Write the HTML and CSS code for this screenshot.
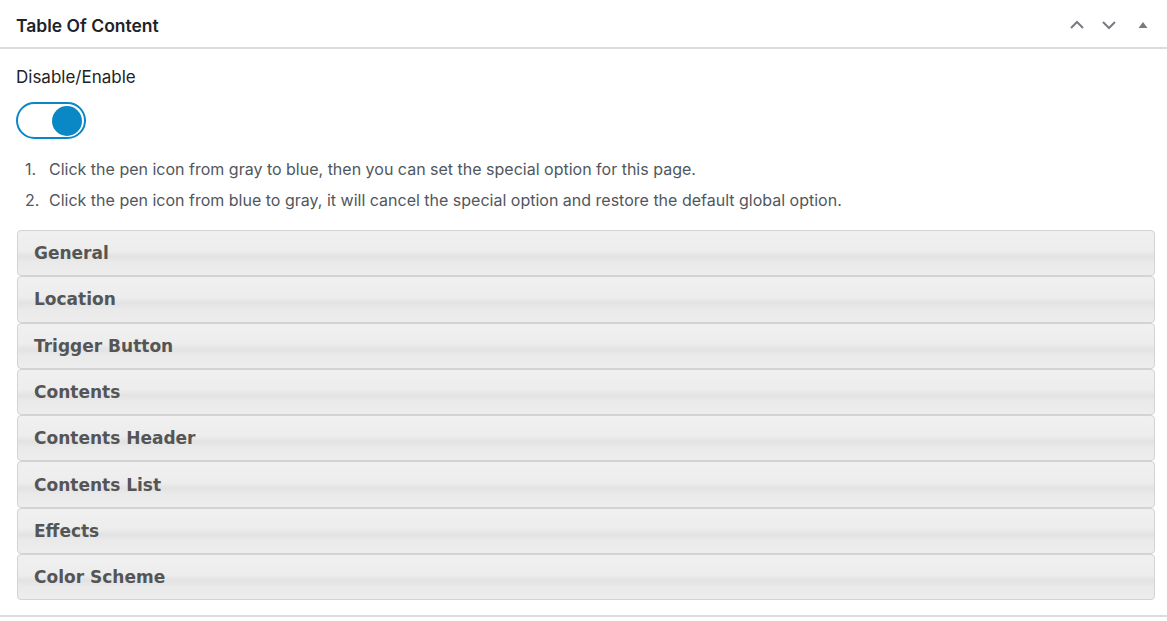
FILE: index.html
```html
<!DOCTYPE html>
<html lang="en">
<head>
    <meta charset="UTF-8">
    <title>Table Of Content</title>
    <link rel="stylesheet" href="styles.css">
</head>
<body>
    <div class="postbox">
        <!-- Cabecera de la caja -->
        <div class="postbox-header">
            <h2 class="postbox-title">Table Of Content</h2>
            <div class="handle-actions">
                <button class="handle-btn" aria-label="Move up">
                    <svg width="20" height="20" viewBox="0 0 20 20"><path d="M4 13 L10 7 L16 13" fill="none" stroke="#787c82" stroke-width="2"/></svg>
                </button>
                <button class="handle-btn" aria-label="Move down">
                    <svg width="20" height="20" viewBox="0 0 20 20"><path d="M4 7 L10 13 L16 7" fill="none" stroke="#787c82" stroke-width="2"/></svg>
                </button>
                <button class="handle-btn toggle-indicator" aria-label="Toggle panel">
                    <svg width="12" height="12" viewBox="0 0 12 12"><path d="M1.5 9 L6 3 L10.5 9 Z" fill="#787c82"/></svg>
                </button>
            </div>
        </div>

        <div class="inside">
            <p class="label">Disable/Enable</p>
            <label class="switch">
                <span class="knob"></span>
            </label>

            <ol class="notes">
                <li>Click the pen icon from gray to blue, then you can set the special option for this page.</li>
                <li>Click the pen icon from blue to gray, it will cancel the special option and restore the default global option.</li>
            </ol>

            <!-- Secciones del acordeón -->
            <div class="accordion">
                <h3 class="acc-header">General</h3>
                <h3 class="acc-header">Location</h3>
                <h3 class="acc-header">Trigger Button</h3>
                <h3 class="acc-header">Contents</h3>
                <h3 class="acc-header">Contents Header</h3>
                <h3 class="acc-header">Contents List</h3>
                <h3 class="acc-header">Effects</h3>
                <h3 class="acc-header">Color Scheme</h3>
            </div>
        </div>
    </div>
</body>
</html>
```
FILE: styles.css
```css
body {
    margin: 0;
    background: #fff;
    font-family: "Inter", "Liberation Sans", Arial, sans-serif;
    color: #1d2327;
}
.postbox {
    border-bottom: 2px solid #dcdcde;
    padding-bottom: 15px;
}
.postbox-header {
    display: flex;
    align-items: center;
    justify-content: space-between;
    box-sizing: border-box;
    height: 49px;
    padding-top: 3px;
    border-bottom: 2px solid #dcdcde;
}
.postbox-title {
    margin: 0;
    padding-left: 16px;
    font-size: 17.5px;
    font-weight: 600;
    color: #1d2327;
}
.handle-actions {
    display: flex;
    align-items: center;
    padding-right: 10px;
}
.handle-btn {
    background: none;
    border: 0;
    padding: 0;
    width: 32px;
    height: 32px;
    display: flex;
    align-items: center;
    justify-content: center;
}
.toggle-indicator {
    width: 28px;
    margin-left: 4px;
}
.inside {
    padding: 0 12px 0 16px;
}
.label {
    margin: 18px 0 15px;
    font-size: 17px;
    color: #1d2327;
}
.switch {
    display: flex;
    justify-content: flex-end;
    align-items: center;
    box-sizing: border-box;
    width: 70px;
    height: 37px;
    border: 2.5px solid #0a87c5;
    border-radius: 19px;
    padding: 0 2px;
}
.knob {
    width: 30px;
    height: 30px;
    border-radius: 50%;
    background: #0a87c5;
}
.notes {
    margin: 20px 0 20px;
    padding-left: 9px;
    list-style: none;
    counter-reset: note;
    font-size: 16px;
    color: #50575e;
}
.notes li {
    counter-increment: note;
    display: flex;
    line-height: 20px;
    margin-bottom: 11px;
}
.notes li::before {
    content: counter(note) ".";
    width: 24px;
    flex-shrink: 0;
}
.accordion {
    margin-left: 1px;
}
.acc-header {
    margin: 0;
    box-sizing: border-box;
    height: 46.3px;
    padding: 0 16px;
    display: flex;
    align-items: center;
    font-family: "DejaVu Sans", Verdana, sans-serif;
    font-size: 17px;
    font-weight: bold;
    color: #555;
    border: 1px solid #d3d3d3;
    border-radius: 4px;
    background: linear-gradient(to bottom, #f0f0f0 0%, #ededed 45%, #e3e3e3 58%, #eaeaea 72%, #ededed 100%);
}
```
